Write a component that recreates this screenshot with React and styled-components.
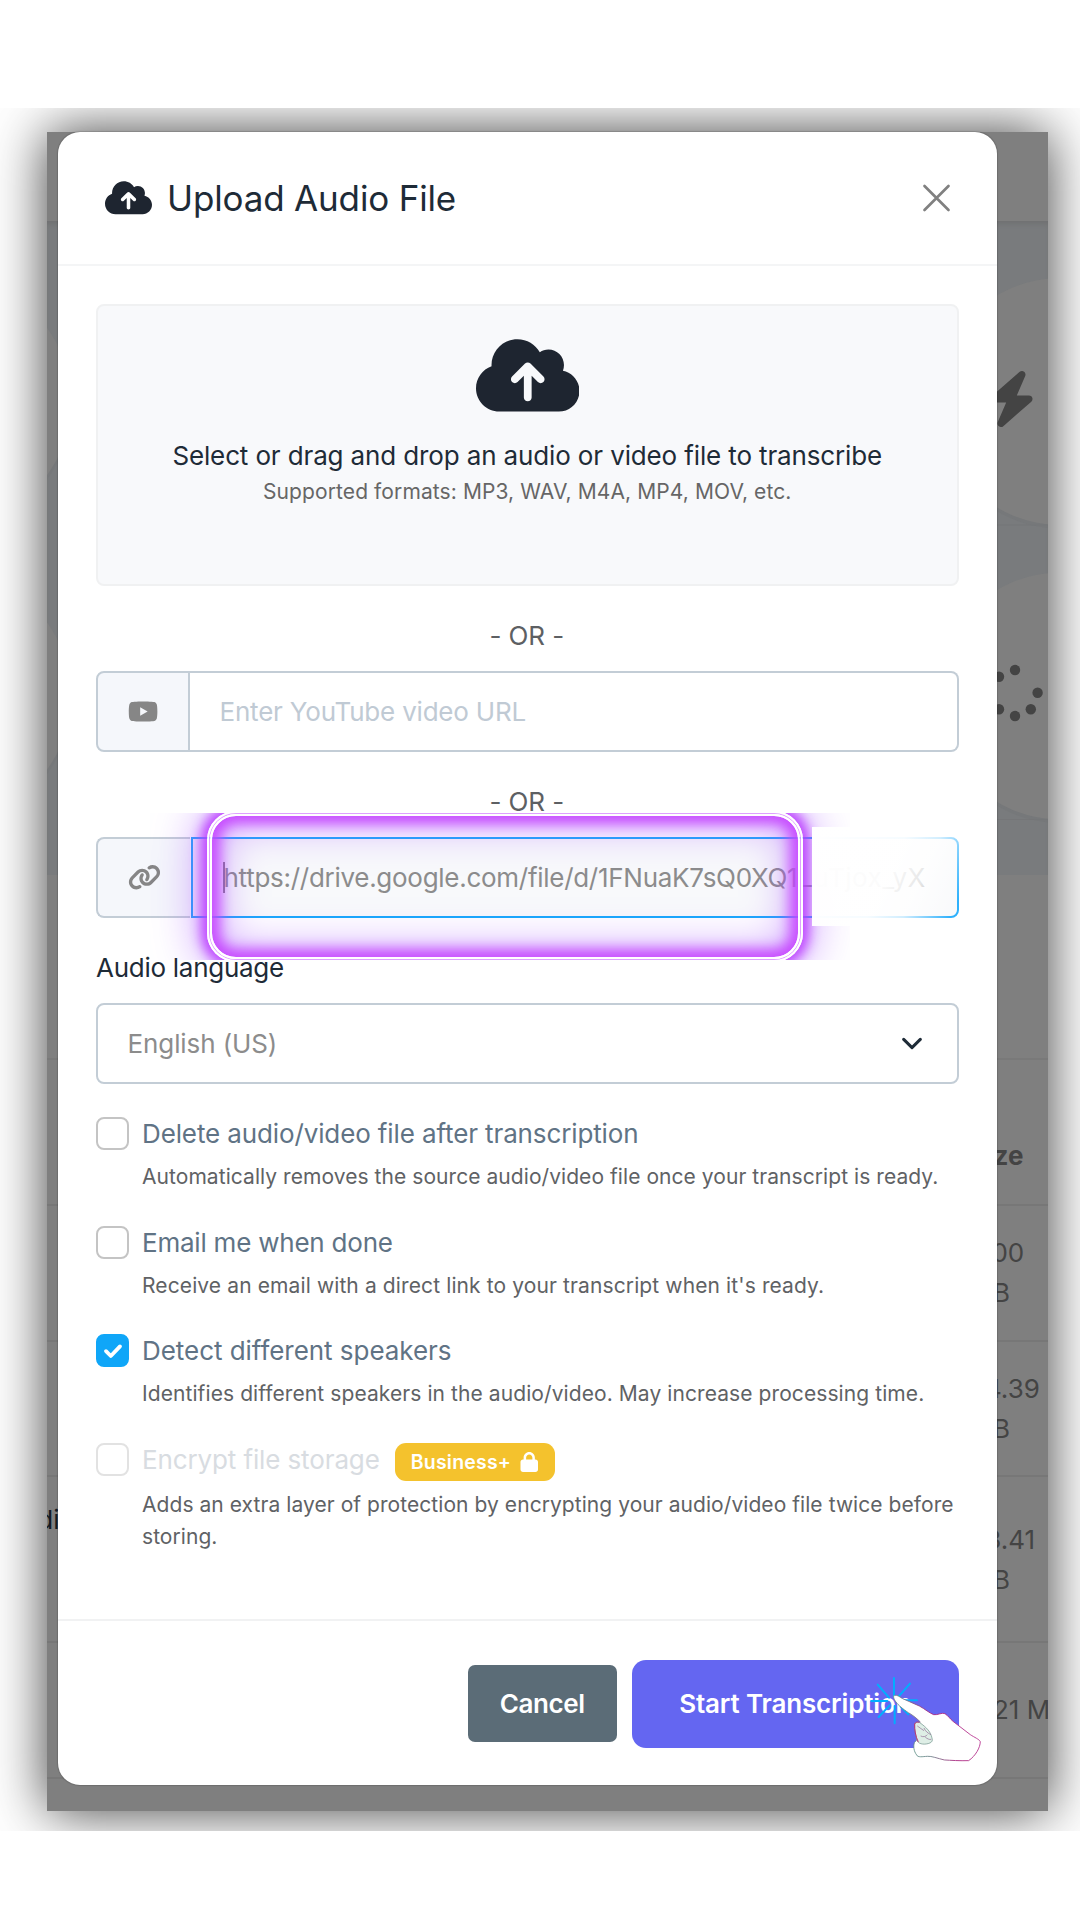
import React from "react";
import styled, { createGlobalStyle, css } from "styled-components";
import { FaBolt, FaCloudArrowUp, FaLink, FaLock, FaYoutube } from "react-icons/fa6";

const GlobalStyle = createGlobalStyle`
  * { box-sizing: border-box; }
  body { margin: 0; background: #fff; font-family: Inter, "Liberation Sans", sans-serif; }
`;

const Page = styled.div`
  width: 1080px;
  height: 1920px;
  padding-top: 108px;
  background: #fff;
`;

const Stage = styled.div`
  height: 1723px;
  padding: 24px 32px 20px 47px;
  overflow: hidden;
`;

const Shot = styled.div`
  height: 1679px;
  display: grid;
  grid-template: 100% / 100%;
  background: #7f7f7f;
  box-shadow: 0 0 52px rgba(0, 0, 0, 0.76);
  > * { grid-area: 1 / 1; }
`;

/* ---------- dimmed page behind the dialog ---------- */

const Backdrop = styled.div`
  display: flex;
  flex-direction: column;
  overflow: hidden;
  color: #444;
  font-size: 26px;
`;

const TopBar = styled.div`
  flex: none;
  height: 89px;
`;

const Hero = styled.div`
  flex: none;
  height: 654px;
  background: #797b7d;
  box-shadow: inset 0 5px 5px -2px #707172;
  > svg { display: block; }
`;

const TableHead = styled.div`
  flex: none;
  height: 185px;
  border-bottom: 2px solid #797979;
`;

const TableRow = styled.div`
  flex: none;
  display: flex;
  justify-content: space-between;
  height: ${(p) => p.$h}px;
  border-bottom: 2px solid #777;
`;

const NameCell = styled.div`
  width: 12.5px;
  padding-top: ${(p) => p.$top}px;
  display: flex;
  justify-content: flex-end;
  overflow: hidden;
  color: #141a22;
  line-height: 39px;
`;

const SizeCell = styled.div`
  width: 78.5px;
  padding-top: ${(p) => p.$top}px;
  line-height: 39.5px;
  white-space: nowrap;
  font-weight: ${(p) => (p.$bold ? 700 : 400)};
  div { height: 39.5px; }
`;

/* ---------- dialog ---------- */

const Dialog = styled.div`
  width: 938.5px;
  height: 1653px;
  margin-left: 11px;
  display: flex;
  flex-direction: column;
  position: relative;
  background: #fff;
  border-radius: 22px;
  box-shadow: 0 0 1px 1px rgba(0, 0, 0, 0.15);
`;

const Header = styled.header`
  flex: none;
  height: 134px;
  padding: 0 46px 0 47px;
  display: flex;
  align-items: center;
  border-bottom: 2px solid #f4f5f6;
  color: #1e2530;
  > svg:first-child { width: 47px; height: 37.6px; }
  > svg:last-child { margin-left: auto; }
`;

const Title = styled.h1`
  margin: 0 0 0 15px;
  font-size: 35px;
  font-weight: 400;
  line-height: 44px;
  letter-spacing: -0.16px;
  color: #1e2b37;
`;

const Body = styled.main`
  flex: 1;
  padding: 38px 38px 0;
`;

const DropZone = styled.div`
  height: 282px;
  padding-top: 27.5px;
  display: flex;
  flex-direction: column;
  align-items: center;
  border: 2px solid #f0f1f2;
  border-radius: 8px;
  background: #f8f9fb;
  color: #1e2530;
  svg { width: 103.5px; height: 82.8px; }
`;

const DropTitle = styled.div`
  margin-top: 22px;
  font-size: 26px;
  line-height: 36px;
  letter-spacing: -0.133px;
  color: #1e2b37;
`;

const DropHint = styled.div`
  margin-top: 3px;
  font-size: 21px;
  line-height: 30px;
  letter-spacing: 0.1px;
  color: #666;
`;

const Or = styled.div`
  margin: 30px 1px 15px 0;
  font-size: 26px;
  line-height: 40px;
  letter-spacing: -0.1px;
  text-align: center;
  color: #5d6063;
`;

const Group = styled.div`
  position: relative;
  display: flex;
  height: 81px;
`;

const Prefix = styled.div`
  width: 94px;
  padding-left: ${(p) => (p.$open ? 1.5 : 0)}px;
  display: flex;
  align-items: center;
  justify-content: center;
  border: 2px solid #c3cdd6;
  border-right-width: ${(p) => (p.$open ? 0 : 2)}px;
  border-radius: 8px 0 0 8px;
  background: #f5f7fb;
  color: #868686;
`;

const Field = styled.div`
  flex: 1;
  display: flex;
  align-items: center;
  padding-left: 29.5px;
  border: 2px solid #c3cdd6;
  border-left: 0;
  border-radius: 0 8px 8px 0;
  font-size: 26px;
  letter-spacing: -0.2px;
  white-space: nowrap;
  color: #c0cad4;
  ${(p) =>
    p.$focused &&
    css`
      border: 2px solid #17a8fc;
      padding-left: 30px;
      margin-left: 1px;
      background: #f8f9fb;
      color: #8c8c8c;
      letter-spacing: -0.28px;
    `}
`;

const Caret = styled.i`
  width: 1.5px;
  height: 31px;
  margin-right: -1px;
  background: #777;
`;

const UrlTail = styled.span`
  letter-spacing: 0.5px;
`;

/* Neon frame laid over the URL field, cut off flat at the top and bottom. */
const Glow = styled.div`
  position: absolute;
  left: 54px;
  top: -24px;
  width: 700px;
  height: 147px;
  overflow: hidden;
  z-index: 1;
`;

const GlowFrame = styled.div`
  position: absolute;
  left: 57px;
  top: -2px;
  width: 596px;
  height: 151px;
  border: 2px solid #fff;
  border-radius: 29px;
  box-shadow:
    0 0 12px 6px rgba(188, 60, 255, 0.92),
    0 0 44px 10px rgba(165, 85, 255, 0.55);
  &::after {
    content: "";
    position: absolute;
    inset: 1px;
    border: 2px solid #fff;
    border-radius: 26px;
    box-shadow:
      0 0 0 1px #dfa0ff,
      inset 0 0 13px 8px rgba(198, 70, 255, 0.95),
      inset 0 0 42px 10px rgba(165, 85, 255, 0.5);
  }
`;

const Smudge = styled.div`
  position: absolute;
  left: 716px;
  top: -10px;
  width: 150px;
  height: 99px;
  z-index: 2;
  background: linear-gradient(
    115deg,
    rgba(255, 255, 255, 1) 0,
    rgba(255, 255, 255, 0.96) 50%,
    rgba(255, 255, 255, 0.8) 68%,
    rgba(255, 255, 255, 0.1) 92%
  );
`;

const Label = styled.div`
  position: relative;
  z-index: 3;
  margin: 30px 0 15px;
  font-size: 26px;
  line-height: 40px;
  letter-spacing: -0.27px;
  color: #1e2b37;
`;

const Select = styled.div`
  height: 81px;
  padding: 0 35px 0 29.5px;
  display: flex;
  align-items: center;
  justify-content: space-between;
  border: 2px solid #c3cdd6;
  border-radius: 8px;
  font-size: 26px;
  letter-spacing: -0.1px;
  color: #8c8c8c;
`;

const Options = styled.div`
  margin-top: 33px;
  display: flex;
  flex-direction: column;
  gap: 32.2px;
`;

const Option = styled.div`
  display: grid;
  grid-template-columns: 33px 1fr;
  column-gap: 13px;
  height: 76.5px;
  align-content: start;
`;

const Box = styled.div`
  width: 33px;
  height: 33px;
  display: flex;
  align-items: center;
  justify-content: center;
  border: 2px solid ${(p) => (p.$on ? "#0fa6f8" : p.$disabled ? "#e2e2e2" : "#c4c4c4")};
  border-radius: 8px;
  background: ${(p) => (p.$on ? "#0fa6f8" : "#fff")};
`;

const OptionLabel = styled.div`
  height: ${(p) => (p.$disabled ? 38 : 33)}px;
  display: flex;
  align-items: flex-start;
  font-size: 26px;
  line-height: 34px;
  letter-spacing: ${(p) => p.$ls}px;
  color: ${(p) => (p.$disabled ? "#d8dce1" : "#607385")};
`;

const OptionHint = styled.div`
  grid-column: 2;
  margin-top: ${(p) => (p.$disabled ? 7.5 : 11)}px;
  font-size: 21px;
  line-height: 32px;
  letter-spacing: ${(p) => p.$ls}px;
  white-space: nowrap;
  color: #5f6265;
`;

const Badge = styled.span`
  width: 160px;
  height: 38px;
  margin-left: 15px;
  padding: 0 16px;
  display: flex;
  align-items: center;
  justify-content: space-between;
  border-radius: 11px;
  background: #f4c22d;
  color: #fff;
  font-size: 19.5px;
  font-weight: 600;
  letter-spacing: 0.2px;
  svg { width: 18.5px; height: 20px; }
`;

const Footer = styled.footer`
  flex: none;
  height: 166px;
  padding: 1px 37.5px 0 0;
  display: flex;
  align-items: center;
  justify-content: flex-end;
  gap: 15px;
  border-top: 2px solid #f1f2f3;
`;

const Button = styled.button`
  width: ${(p) => (p.$primary ? 327.5 : 148.5)}px;
  height: ${(p) => (p.$primary ? 88 : 77)}px;
  padding: 0;
  border: 0;
  border-radius: ${(p) => (p.$primary ? 14 : 7)}px;
  background: ${(p) => (p.$primary ? "#6466f1" : "#5b6c77")};
  color: #fff;
  font: 600 26px Inter, "Liberation Sans", sans-serif;
  letter-spacing: ${(p) => (p.$primary ? -0.15 : -0.38)}px;
`;

const Pointer = styled.svg`
  position: absolute;
  left: 812px;
  top: 1543px;
  width: 113.3px;
  height: 88.3px;
`;

const rows = [
  { h: 136, top: 27, size: ["5.00", "MB"] },
  { h: 135, top: 27, size: ["24.39", "MB"] },
  { h: 166, top: 43, size: ["23.41", "MB"], name: "Audi" },
  { h: 136, top: 47, size: ["4.21 MB"] },
];

const options = [
  {
    label: "Delete audio/video file after transcription",
    ls: -0.12,
    hint: "Automatically removes the source audio/video file once your transcript is ready.",
    hintLs: 0.06,
  },
  {
    label: "Email me when done",
    ls: -0.22,
    hint: "Receive an email with a direct link to your transcript when it's ready.",
    hintLs: 0.115,
  },
  {
    label: "Detect different speakers",
    ls: -0.04,
    hint: "Identifies different speakers in the audio/video. May increase processing time.",
    hintLs: 0.085,
    on: true,
  },
  {
    label: "Encrypt file storage",
    ls: -0.12,
    hint: (
      <>
        Adds an extra layer of protection by encrypting your audio/video file twice before
        <br />
        storing.
      </>
    ),
    hintLs: 0.06,
    disabled: true,
  },
];

const dots = [
  [999, 676.7], [1015, 670], [1037.6, 692.7], [1030.8, 709.2], [1015, 716], [999, 709.2],
];

function HeroArt() {
  return (
    <svg width="1001" height="654" viewBox="47 221 1001 654">
      {[401.5, 696].map((cy) => (
        <g key={cy}>
          <line x1="997" x2="1048" y1={cy + 123.5} y2={cy + 123.5} stroke="#757678" strokeWidth="1" />
          <circle cx="1060" cy={cy + 3} r="124" fill="#747678" opacity="0.5" />
          <circle cx="1060" cy={cy} r="123.3" fill="#7f7f7f" />
          <circle cx="-52" cy={cy + 3} r="124" fill="#747678" opacity="0.5" />
          <circle cx="-52" cy={cy} r="123.3" fill="#7f7f7f" />
        </g>
      ))}
      <FaBolt x="983.5" y="371" size={56} />
      {dots.map(([x, y]) => (
        <circle key={`${x}-${y}`} cx={x} cy={y} r="5.2" fill="#444" />
      ))}
    </svg>
  );
}

export default function App() {
  return (
    <Page>
      <GlobalStyle />
      <Stage>
        <Shot>
          <Backdrop>
            <TopBar />
            <Hero>
              <HeroArt />
            </Hero>
            <TableHead />
            <TableRow $h={146}>
              <NameCell $top={0} />
              <SizeCell $top={76} $bold>
                <div>Size</div>
              </SizeCell>
            </TableRow>
            {rows.map((r) => (
              <TableRow key={r.size[0]} $h={r.h}>
                <NameCell $top={23}>{r.name}</NameCell>
                <SizeCell $top={r.top}>
                  {r.size.map((s) => (
                    <div key={s}>{s}</div>
                  ))}
                </SizeCell>
              </TableRow>
            ))}
          </Backdrop>

          <Dialog>
            <Header>
              <FaCloudArrowUp />
              <Title>Upload Audio File</Title>
              <svg width="29" height="29" viewBox="0 0 29 29" fill="none" stroke="#808080" strokeWidth="2.7" strokeLinecap="round">
                <path d="M2.5 2 26.5 26M26.5 2 2.5 26" />
              </svg>
            </Header>

            <Body>
              <DropZone>
                <FaCloudArrowUp />
                <DropTitle>Select or drag and drop an audio or video file to transcribe</DropTitle>
                <DropHint>Supported formats: MP3, WAV, M4A, MP4, MOV, etc.</DropHint>
              </DropZone>

              <Or>- OR -</Or>
              <Group>
                <Prefix>
                  <FaYoutube style={{ width: 30.2, height: 27 }} />
                </Prefix>
                <Field>Enter YouTube video URL</Field>
              </Group>

              <Or>- OR -</Or>
              <Group>
                <Prefix $open>
                  <FaLink style={{ width: 33, height: 26.5 }} />
                </Prefix>
                <Field $focused>
                  <Caret />
                  https://drive.google.com/file/d/1FNuaK7sQ0XQ
                  <UrlTail>1LuTjox_yX</UrlTail>
                </Field>
                <Glow>
                  <GlowFrame />
                </Glow>
                <Smudge />
              </Group>

              <Label>Audio language</Label>
              <Select>
                English (US)
                <svg width="20" height="14" viewBox="0 0 20 14" fill="none" stroke="#1e2b37" strokeWidth="3" strokeLinecap="round" strokeLinejoin="round">
                  <path d="M1.7 2.4 10 10.6 18.3 2.4" />
                </svg>
              </Select>

              <Options>
                {options.map((o) => (
                  <Option key={o.label}>
                    <Box $on={o.on} $disabled={o.disabled}>
                      {o.on && (
                        <svg width="20" height="16" viewBox="0 0 20 16" fill="none" stroke="#fff" strokeWidth="3.8" strokeLinecap="round" strokeLinejoin="round">
                          <path d="M3 8.2 7.8 13 17 3.4" />
                        </svg>
                      )}
                    </Box>
                    <OptionLabel $ls={o.ls} $disabled={o.disabled}>
                      {o.label}
                      {o.disabled && (
                        <Badge>
                          Business+
                          <FaLock />
                        </Badge>
                      )}
                    </OptionLabel>
                    <OptionHint $ls={o.hintLs} $disabled={o.disabled}>
                      {o.hint}
                    </OptionHint>
                  </Option>
                ))}
              </Options>
            </Body>

            <Footer>
              <Button>Cancel</Button>
              <Button $primary>Start Transcription</Button>
            </Footer>

            <Pointer viewBox="90 75 340 265" fill="none">
              <defs>
                <linearGradient id="outline" x1="0" y1="1" x2="1" y2="0.6">
                  <stop offset="0" stopColor="#4fb08a" />
                  <stop offset="0.4" stopColor="#6d7f88" />
                  <stop offset="0.62" stopColor="#a8207c" />
                  <stop offset="1" stopColor="#b8308f" />
                </linearGradient>
              </defs>
              <path
                d="M162 84V140M164 168V220M94 153H142M183 151H231M113 104 147 143M210 101 176 139M116 201 149 166M182 170 205 193"
                stroke="#00aeff"
                strokeWidth="6"
                strokeLinecap="round"
              />
              <path
                d="M163 136C171 134 178 140 188 146L238 168C256 178 268 189 281 194C293 196 305 187 315 191C325 198 330 206 339 214L391 254C403 262 418 268 421 275C421 292 407 318 386 332C360 333 332 331 313 330C292 325 275 318 262 319C248 320 233 323 230 315C221 303 220 290 223 278L230 270 240 215C228 203 216 194 205 188C190 178 174 165 168 156C163 150 158 140 163 136Z"
                fill="#fff"
                stroke="url(#outline)"
                strokeWidth="2.6"
              />
              <path
                d="M238 217C232 215 226 217 224 222C223 238 227 260 233 275C238 283 256 285 270 279C276 276 279 272 276 264C272 246 262 234 238 217Z"
                fill="#deeee6"
                stroke="#6d8f88"
                strokeWidth="2"
              />
              <path d="M238 217C232 215 226 217 224 222C223 238 227 260 235 276" stroke="#c02070" strokeWidth="2.6" />
              <path d="M232 228C240 234 246 238 252 242M252 234C256 244 264 250 273 254M242 258C250 262 258 260 262 254M256 262C262 266 268 270 274 268" stroke="#8f6a94" strokeWidth="2" />
            </Pointer>
          </Dialog>
        </Shot>
      </Stage>
    </Page>
  );
}
